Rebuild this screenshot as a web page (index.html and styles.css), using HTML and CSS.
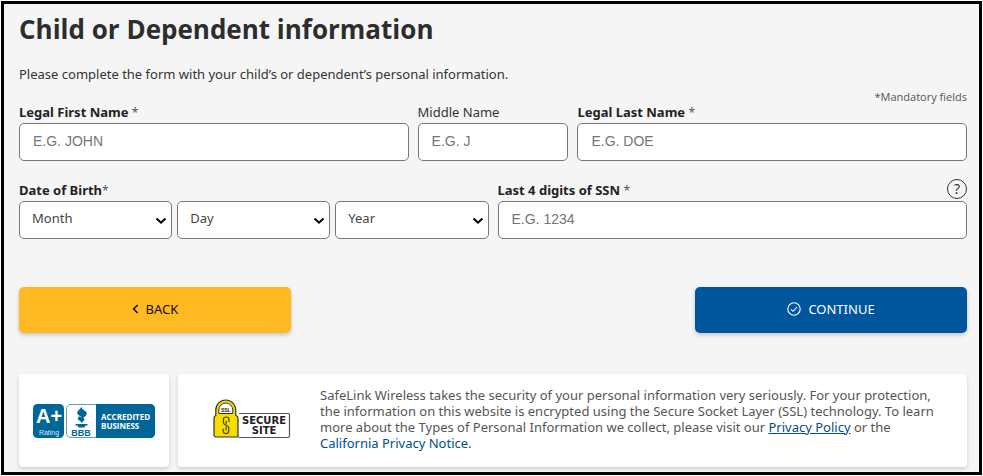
FILE: index.html
```
<!DOCTYPE html>
<html lang="en">
<head>
<meta charset="utf-8">
<meta name="viewport" content="width=device-width, initial-scale=1">
<title>Child or Dependent information</title>
<link rel="stylesheet" href="styles.css">
</head>
<body>
<main class="page">
  <h1 class="title">Child or Dependent information</h1>
  <p class="intro">Please complete the form with your child’s or dependent’s personal information.</p>
  <form class="form">
    <p class="mandatory">*Mandatory fields</p>
    <div class="row names">
      <div class="field">
        <label class="label" for="first"><b>Legal First Name</b> <span class="star">*</span></label>
        <input class="control" id="first" type="text" placeholder="E.G. JOHN">
      </div>
      <div class="field">
        <label class="label" for="middle">Middle Name</label>
        <input class="control" id="middle" type="text" placeholder="E.G. J">
      </div>
      <div class="field">
        <label class="label" for="last"><b>Legal Last Name</b> <span class="star">*</span></label>
        <input class="control" id="last" type="text" placeholder="E.G. DOE">
      </div>
    </div>
    <div class="row details">
      <div class="field">
        <label class="label" for="month"><b>Date of Birth</b><span class="star">*</span></label>
        <div class="dates">
          <div class="picker">
            <select class="control select" id="month"><option>Month</option></select>
            <svg class="arrow" width="12" height="8" viewBox="0 0 12 8"><path d="M1.500 1.500 6 5.700l4.500-4.200"/></svg>
          </div>
          <div class="picker">
            <select class="control select" id="day" aria-label="Day"><option>Day</option></select>
            <svg class="arrow" width="12" height="8" viewBox="0 0 12 8"><path d="M1.500 1.500 6 5.700l4.500-4.200"/></svg>
          </div>
          <div class="picker">
            <select class="control select" id="year" aria-label="Year"><option>Year</option></select>
            <svg class="arrow" width="12" height="8" viewBox="0 0 12 8"><path d="M1.500 1.500 6 5.700l4.500-4.200"/></svg>
          </div>
        </div>
      </div>
      <div class="field">
        <div class="label-line">
          <label class="label" for="ssn"><b>Last 4 digits of SSN</b> <span class="star">*</span></label>
          <button class="help" type="button" aria-label="Help">?</button>
        </div>
        <input class="control" id="ssn" type="text" placeholder="E.G. 1234">
      </div>
    </div>
    <div class="actions">
      <button class="button back" type="button">
        <svg width="7" height="10" viewBox="0 0 7 10" fill="none" stroke="currentColor" stroke-width="1.6"><path d="M5.700 1 1.600 5l4.100 4"/></svg>
        BACK
      </button>
      <button class="button continue" type="submit">
        <svg width="14" height="14" viewBox="0 0 14 14" fill="none" stroke="currentColor" stroke-width="1.1"><circle cx="7" cy="7" r="6.2"/><path d="m4 7.3 2.1 2 4-4.3"/></svg>
        CONTINUE
      </button>
    </div>
  </form>
  <div class="badges">
    <div class="card bbb">
      <svg width="124" height="36" viewBox="0 0 124 36" role="img" aria-label="BBB accredited business, A+ rating">
        <rect x="1" y="1" width="31" height="34" rx="4.5" fill="#006699"/>
        <text x="17" y="20" class="grade">A+</text>
        <text x="17" y="32" class="rating">Rating</text>
        <rect x="34.500" y="1.500" width="88" height="33" rx="4.500" fill="#fff" stroke="#5b9dbf"/>
        <path d="M64 1h54.500a4.500 4.500 0 0 1 4.500 4.500v25a4.500 4.500 0 0 1-4.500 4.500H64z" fill="#006699"/>
        <path d="M49.500 3.500c-.8 2.300-4.300 4-4.300 6.300 0 2 2 2.600 3.600 3.800.8.600 1.100 1.200 1 2 2.400-1.300 5.200-3 5-5.300-.2-2-2.500-2.600-4-4-.9-.9-1.300-1.700-1.300-2.800z" fill="#006699"/>
        <path d="M47.200 13.300c-1.100.8-1.800 1.800-1.200 3 .5 1 2 1.300 2.700 2.300.3.400.3.800.2 1.300 1.700-.9 3.600-2 3.500-3.600-.1-1.700-3.300-1.700-5.200-3z" fill="#006699"/>
        <path d="M43.500 21h12v1.600h-12zM45.500 22.600h8l-1 1.900h-6z" fill="#006699"/>
        <text x="49" y="33" class="bbb-name">BBB</text>
        <text x="69" y="17" class="accredited">ACCREDITED</text>
        <text x="69" y="26" class="accredited">BUSINESS</text>
      </svg>
    </div>
    <div class="card security">
      <svg class="ssl" width="78" height="40" viewBox="0 0 78 40" role="img" aria-label="SSL secure site">
        <path d="M26 14.500h49.500a1 1 0 0 1 1 1V37a1.500 1.500 0 0 1-1.500 1.500H26" fill="#fff" stroke="#555" stroke-width="1.200"/>
        <path d="M1 19c0-1.600.8-2.200 1.800-2.500V11a10 10 0 0 1 20 0v5.500c1.500.3 2.200 1 2.200 2.500v19H3c-1.300 0-2-.8-2-2z" fill="#f7dc00" stroke="#333" stroke-width="1.200"/>
        <path d="M5.800 14.500V11a7 7 0 0 1 14 0v3.500z" fill="#fff" stroke="#333"/>
        <text x="12.800" y="13" class="ssl-name">SSL</text>
        <g fill="none" stroke="#4c470f" stroke-width="1.200" stroke-linecap="round">
          <path d="M16 22.500v-1.700a2.800 2.800 0 0 0-5.600 0v2.700c0 1.500.7 2 2.400 2.700 1.800.7 3 1.200 3 3v2.600a2.800 2.800 0 0 1-5.600 0V30"/>
          <path d="M13.100 22v3M13.100 28v3"/>
        </g>
        <text x="51" y="25" class="secure">SECURE</text>
        <text x="51" y="35" class="secure">SITE</text>
      </svg>
      <p class="notice">SafeLink Wireless takes the security of your personal information very seriously. For your protection, the information on this website is encrypted using the Secure Socket Layer (SSL) technology. To learn more about the Types of Personal Information we collect, please visit our <a class="link underlined" href="#">Privacy Policy</a> or the <a class="link" href="#">California Privacy Notice.</a></p>
    </div>
  </div>
</main>
</body>
</html>
```
FILE: styles.css
```
* { box-sizing: border-box; }
body {
  margin: 0;
  background: #fff;
  color: #333;
  font: 13px/20px "Noto Sans", "Open Sans", sans-serif;
}
.page {
  margin: 1px;
  padding: 8px 12px 5px 15px;
  border: 3px solid #000;
  background: #f5f5f5;
}
.title {
  margin: 0;
  color: #2d2d2d;
  font: 700 26px/34px "Open Sans", sans-serif;
}
.intro { margin: 18px 0 0; }
.mandatory {
  margin: 6px 0 0;
  color: #555;
  font: 11px/13px "Open Sans", sans-serif;
  text-align: right;
}
.row { display: grid; gap: 9px; }
.names { grid-template-columns: 390fr 151fr 390fr; }
.details { grid-template-columns: 1fr 1fr; margin-top: 20px; }
.field { min-width: 0; }
.label { display: block; height: 20px; line-height: 18px; }
.label b { color: #222; }
.star { color: #555; font-size: 12px; line-height: 1; }
.label-line { display: flex; justify-content: space-between; }
.help {
  width: 20px;
  height: 20px;
  margin-top: -2px;
  padding: 0;
  border: 1px solid #333;
  border-radius: 50%;
  background: none;
  color: #333;
  font: 14px/18px "Noto Sans", sans-serif;
}
.control {
  display: block;
  width: 100%;
  height: 38px;
  padding: 0 13px 2px;
  border: 1px solid #777;
  border-radius: 5px;
  background: #fff;
  color: #444;
  font: 14px "Liberation Sans", Arial, sans-serif;
}
.control::placeholder { color: #757575; opacity: 1; }
.dates { display: grid; grid-template-columns: repeat(3, 1fr); gap: 5px; }
.picker { position: relative; }
.select {
  padding: 0 20px 4px 12px;
  appearance: none;
  font: 13px "Noto Sans", sans-serif;
}
.arrow {
  position: absolute;
  top: 16px;
  right: 5px;
  fill: none;
  stroke: #000;
  stroke-width: 2;
  pointer-events: none;
}
.actions {
  display: flex;
  justify-content: space-between;
  margin-top: 48px;
}
.button {
  display: flex;
  align-items: center;
  justify-content: center;
  gap: 7px;
  width: 272px;
  height: 46px;
  padding: 0 0 2px;
  border: 0;
  border-radius: 5px;
  box-shadow: 0 2px 4px rgba(0, 0, 0, .2);
  font: 13px/20px "Noto Sans", sans-serif;
}
.back { background: #ffb922; color: #111; }
.continue { background: #00569d; color: #fff; }
.badges { display: flex; gap: 9px; margin-top: 41px; }
.card {
  display: flex;
  align-items: center;
  min-height: 93px;
  border-radius: 4px;
  background: #fff;
  box-shadow: 0 2px 4px rgba(0, 0, 0, .16);
}
.bbb { flex: none; justify-content: center; width: 150px; }
.security { flex: 1; padding: 0 24px 4px 35px; }
.ssl { flex: none; margin-right: 29px; }
.notice { margin: 0; color: #555; line-height: 16px; }
.link { color: #004f8b; text-decoration: none; }
.underlined { text-decoration: underline; }
svg text { font-family: "Liberation Sans", Arial, sans-serif; text-anchor: middle; }
svg .grade { fill: #fff; font-size: 20px; font-weight: 700; }
svg .rating { fill: #d5e8f1; font-size: 7px; }
svg .bbb-name { fill: #006699; font-size: 9px; font-weight: 700; }
svg .accredited { fill: #fff; font: 700 8px "Open Sans", sans-serif; text-anchor: start; }
svg .ssl-name { fill: #222; font-size: 5px; font-weight: 700; }
svg .secure { fill: #222; font: 700 10px "DejaVu Sans", sans-serif; }
```
